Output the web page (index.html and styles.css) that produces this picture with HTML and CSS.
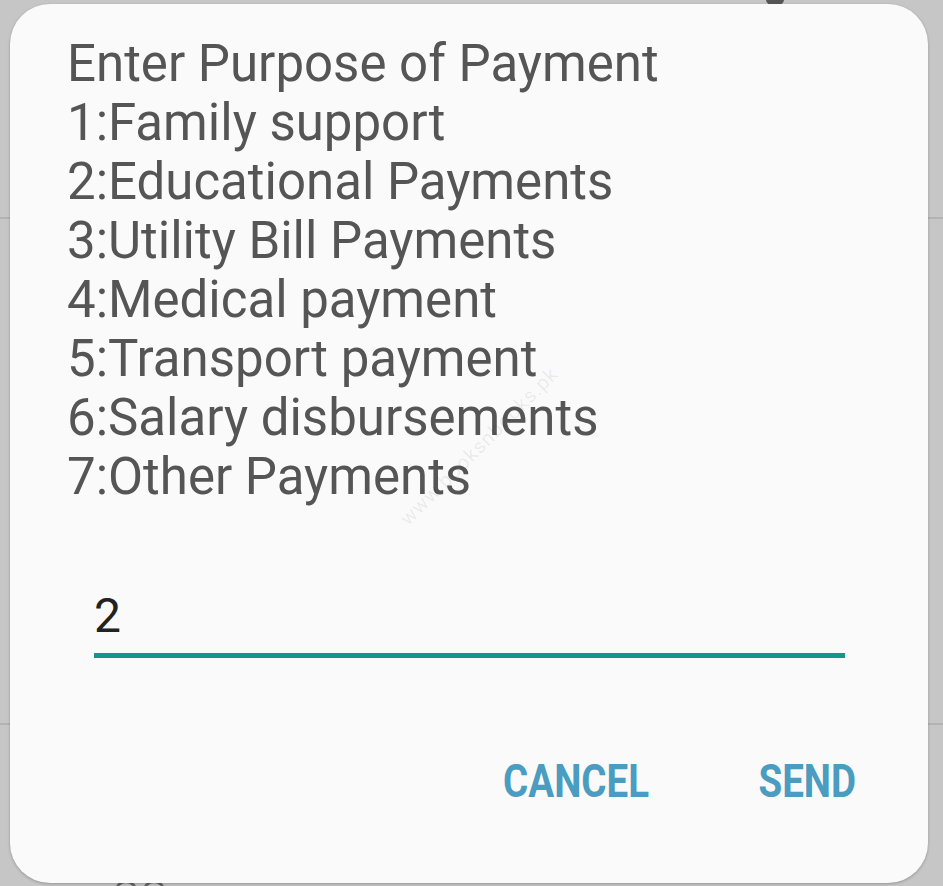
FILE: index.html
```html
<!DOCTYPE html>
<html lang="en">
<head>
    <meta charset="UTF-8">
    <title>Purpose of Payment</title>
    <link rel="stylesheet" href="styles.css">
</head>
<body>
    <div class="peek-top"></div>
    <div class="peek-bottom"><span></span><span></span></div>

    <div class="dialog">
        <div class="message">
            <p>Enter Purpose of Payment</p>
            <p>1:Family support</p>
            <p>2:Educational Payments</p>
            <p>3:Utility Bill Payments</p>
            <p>4:Medical payment</p>
            <p>5:Transport payment</p>
            <p>6:Salary disbursements</p>
            <p>7:Other Payments</p>
        </div>

        <div class="field">
            <span class="field-value">2</span>
        </div>

        <div class="actions">
            <span class="btn btn-cancel">CANCEL</span>
            <span class="btn btn-send">SEND</span>
        </div>

        <div class="watermark">www.booksnbooks.pk</div>
    </div>
</body>
</html>
```

FILE: styles.css
```css
*{
    margin: 0;
    padding: 0;
    box-sizing: border-box;
}
html, body{
    width: 943px;
    height: 886px;
    overflow: hidden;
}
body{
    position: relative;
    padding: 4px 15px 3px 10px;
    background: #c6c6c6;
    background-image:
        linear-gradient(to bottom, transparent 217px, #b3b3b3 217px, #b3b3b3 219px, transparent 219px),
        linear-gradient(to bottom, transparent 723px, #b3b3b3 723px, #b3b3b3 725px, transparent 725px);
    font-family: Roboto, "Noto Sans", sans-serif;
}
.peek-top{
    position: absolute;
    left: 766px;
    top: -6px;
    width: 18px;
    height: 12px;
    border-radius: 50%;
    background: #555;
}
.peek-bottom{
    position: absolute;
    left: 115px;
    top: 880px;
    display: flex;
    gap: 6px;
}
.peek-bottom span{
    width: 22px;
    height: 22px;
    border: 3px solid #666;
    border-radius: 50%;
}
.dialog{
    position: relative;
    height: 879px;
    background: #fafafa;
    border-radius: 40px;
    box-shadow: 0 1px 3px rgba(0,0,0,0.25);
    padding: 30px 0 0 57px;
    display: flex;
    flex-direction: column;
}
.message{
    color: #555555;
    font-size: 51px;
    line-height: 59px;
}
.message p{
    white-space: nowrap;
}
.field{
    margin: 84px 0 0 27px;
    width: 751px;
    border-bottom: 5px solid #16958a;
    padding-bottom: 11px;
}
.field-value{
    display: block;
    color: #222;
    font-size: 48px;
    line-height: 52px;
}
.actions{
    display: flex;
    justify-content: flex-end;
    align-items: center;
    margin-top: 97px;
    padding-right: 72px;
}
.btn{
    display: inline-block;
    color: #4a9cc0;
    font-weight: bold;
    font-size: 47px;
    line-height: 52px;
    transform: scaleX(0.82);
    transform-origin: right center;
}
.btn-cancel{
    margin-right: 88px;
}
.watermark{
    position: absolute;
    left: 362px;
    top: 430px;
    color: rgba(0,0,0,0.07);
    font-size: 20px;
    letter-spacing: 1px;
    transform: rotate(-45deg);
}
```
